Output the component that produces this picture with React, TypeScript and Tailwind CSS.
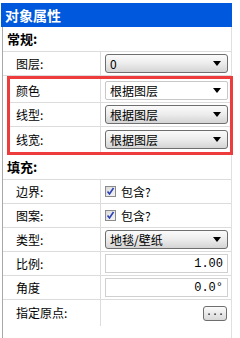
import React from "react";

const cjk = { fontFamily: '"Noto Sans CJK SC", "Noto Sans", sans-serif' };

function Arrow() {
  return (
    <svg width="8" height="5" viewBox="0 0 8 5" className="shrink-0">
      <path d="M0 0 H8 L4 5 Z" fill="#000" />
    </svg>
  );
}

function Select({ value, flat }: { value: string; flat?: boolean }) {
  return (
    <div
      className={
        flat
          ? "flex h-[19px] w-[123px] items-center justify-between rounded-[2px] border border-[#c8c8c8] bg-white pl-[4px] pr-[6px]"
          : "flex h-[19px] w-[123px] items-center justify-between rounded-[3px] border border-[#6e6e6e] bg-gradient-to-b from-[#fbfbfb] via-[#ececec] to-[#d4d4d4] pl-[4px] pr-[6px]"
      }
    >
      <span className="text-[12px] leading-none text-black" style={cjk}>
        {value}
      </span>
      <Arrow />
    </div>
  );
}

function Input({ value }: { value: string }) {
  return (
    <div className="flex h-[19px] w-[123px] items-center justify-end border border-[#d0d0d0] bg-white pr-[4px]">
      <span className="text-[12px] leading-none text-black" style={{ fontFamily: '"Liberation Mono", monospace' }}>
        {value}
      </span>
    </div>
  );
}

function Check() {
  return (
    <div className="flex items-center gap-[5px]">
      <div className="flex h-[11px] w-[11px] items-center justify-center border border-[#8a8a8a] bg-gradient-to-br from-[#dcdcdc] to-[#f4f4f4]">
        <svg width="9" height="9" viewBox="0 0 9 9">
          <path d="M1.5 4.5 L3.5 7 L7.5 1" stroke="#2a40b8" strokeWidth="1.6" fill="none" />
        </svg>
      </div>
      <span className="text-[12px] leading-none text-black" style={cjk}>
        包含?
      </span>
    </div>
  );
}

function Row({
  label,
  children,
  labelW = 98,
  last,
  h = 24,
}: {
  label: string;
  children?: React.ReactNode;
  labelW?: number;
  last?: boolean;
  h?: number;
}) {
  return (
    <div className={last ? "flex" : "flex border-b border-[#dcdcdc]"} style={{ height: h }}>
      <div
        className="flex items-center border-r border-[#dcdcdc] text-[12px] text-black"
        style={{ ...cjk, width: labelW, paddingLeft: labelW === 98 ? 13 : 6 }}
      >
        {label}
      </div>
      <div className="flex flex-1 items-center pl-[4px]">{children}</div>
    </div>
  );
}

function Section({ title }: { title: string }) {
  return (
    <div className="flex h-[25px] items-center border-b border-[#dcdcdc] pl-[4px]">
      <span className="text-[13px] font-bold text-black" style={cjk}>
        {title}
      </span>
    </div>
  );
}

export default function App() {
  return (
    <div className="h-[338px] w-[240px] overflow-hidden bg-white pt-[3px]">
      <div className="ml-[1px] flex h-[24px] w-[231px] items-center bg-[#0058dc] pl-[4px]">
        <span className="text-[14px] font-bold text-white" style={cjk}>
          对象属性
        </span>
      </div>
      <div className="ml-[2px] h-[311px] w-[230px] border-l border-r border-[#a8a8a8] border-r-[#e0e0e0]">
        <Section title="常规:" />
        <Row label="图层:" h={24}>
          <Select value="0" />
        </Row>
        <div className="-mr-[2px] ml-[4px] border-[3px] border-[#ee3b3b]">
          <Row label="颜色" labelW={91}>
            <Select value="根据图层" flat />
          </Row>
          <Row label="线型:" labelW={91}>
            <Select value="根据图层" />
          </Row>
          <Row label="线宽:" labelW={91} last h={25}>
            <Select value="根据图层" />
          </Row>
        </div>
        <Section title="填充:" />
        <Row label="边界:">
          <Check />
        </Row>
        <Row label="图案:">
          <Check />
        </Row>
        <Row label="类型:">
          <Select value="地毯/壁纸" />
        </Row>
        <Row label="比例:">
          <Input value="1.00" />
        </Row>
        <Row label="角度">
          <Input value="0.0°" />
        </Row>
        <Row label="指定原点:" last h={26}>
          <div className="flex w-[123px] justify-end pr-[1px]">
            <div className="flex h-[15px] w-[24px] items-center justify-center rounded-[3px] border border-[#6e6e6e] bg-gradient-to-b from-[#fbfbfb] to-[#d8d8d8]">
              <span className="text-[10px] leading-none text-black" style={{ fontFamily: '"Liberation Mono", monospace' }}>
                ...
              </span>
            </div>
          </div>
        </Row>
      </div>
    </div>
  );
}
